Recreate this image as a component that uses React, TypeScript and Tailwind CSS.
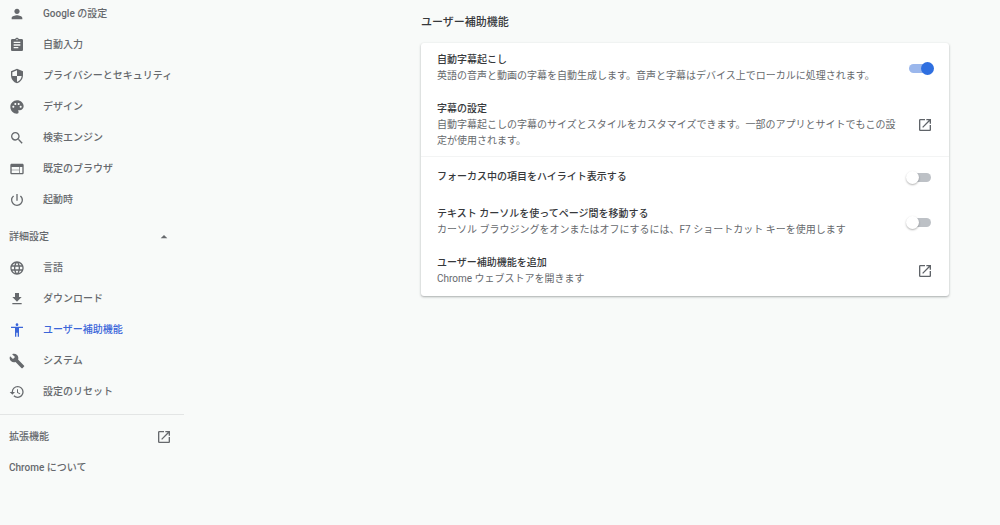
import { useState } from 'react'
import type { IconType } from 'react-icons'
import {
  MdAccessibility,
  MdArrowDropUp,
  MdAssignment,
  MdBuild,
  MdDownload,
  MdLanguage,
  MdOpenInNew,
  MdPalette,
  MdPerson,
  MdPowerSettingsNew,
  MdRestore,
  MdSearch,
  MdSecurity,
  MdWeb,
} from 'react-icons/md'

interface NavItem {
  label: string
  icon: IconType
  active?: boolean
}

const basicItems: NavItem[] = [
  { label: 'Google の設定', icon: MdPerson },
  { label: '自動入力', icon: MdAssignment },
  { label: 'プライバシーとセキュリティ', icon: MdSecurity },
  { label: 'デザイン', icon: MdPalette },
  { label: '検索エンジン', icon: MdSearch },
  { label: '既定のブラウザ', icon: MdWeb },
  { label: '起動時', icon: MdPowerSettingsNew },
]

const advancedItems: NavItem[] = [
  { label: '言語', icon: MdLanguage },
  { label: 'ダウンロード', icon: MdDownload },
  { label: 'ユーザー補助機能', icon: MdAccessibility, active: true },
  { label: 'システム', icon: MdBuild },
  { label: '設定のリセット', icon: MdRestore },
]

function NavList({ items }: { items: NavItem[] }) {
  return (
    <ul>
      {items.map(({ label, icon: Icon, active }) => (
        <li key={label}>
          <a
            href="#"
            aria-current={active ? 'page' : undefined}
            className={`flex h-[31px] items-center gap-[18px] pl-[9px] ${active ? 'text-[#3b66d9]' : ''}`}
          >
            <Icon className="size-4 shrink-0" />
            <span className="whitespace-nowrap">{label}</span>
          </a>
        </li>
      ))}
    </ul>
  )
}

function Sidebar() {
  const [open, setOpen] = useState(true)

  return (
    <nav className="-mt-0.5 w-[184px] shrink-0 font-medium text-[#66696d]">
      <NavList items={basicItems} />

      <button
        type="button"
        aria-expanded={open}
        onClick={() => setOpen(!open)}
        className="mt-1.5 flex h-[31px] w-full items-center justify-between pr-3 pl-[9px]"
      >
        詳細設定
        <MdArrowDropUp className={open ? 'size-4' : 'size-4 rotate-180'} />
      </button>
      {open && <NavList items={advancedItems} />}

      {/* Footer links */}
      <div className="mt-[7px] border-t border-[#e3e5e5] pt-1.5">
        <a href="#" className="flex h-[31px] items-center justify-between pr-3 pl-[9px]">
          拡張機能
          <MdOpenInNew className="size-4" />
        </a>
        <a href="#" className="flex h-[31px] items-center pl-[9px]">
          Chrome について
        </a>
      </div>
    </nav>
  )
}

interface RowProps {
  title: string
  description?: string
}

function RowText({ title, description }: RowProps) {
  return (
    <span className="block flex-1">
      <span className="block font-medium text-[#36383b]">{title}</span>
      {description && <span className="block text-[#66696d]">{description}</span>}
    </span>
  )
}

function ToggleRow({ title, description, defaultChecked }: RowProps & { defaultChecked?: boolean }) {
  return (
    <label className={`flex items-center gap-5 px-4 py-2 ${description ? 'min-h-[50px]' : 'min-h-10'}`}>
      <RowText title={title} description={description} />
      <input
        type="checkbox"
        role="switch"
        defaultChecked={defaultChecked}
        className="relative mr-0.5 h-[9px] w-[22px] shrink-0 appearance-none rounded-full bg-[#bdc1c6] before:absolute before:-top-0.5 before:-left-[3px] before:size-[13px] before:rounded-full before:bg-white before:shadow-[0_1px_2px_rgba(0,0,0,0.3)] checked:bg-[#9bb7ec] checked:before:left-3 checked:before:bg-[#2f6fe0] checked:before:shadow-none"
      />
    </label>
  )
}

function LinkRow({ title, description }: RowProps) {
  return (
    <a href="#" className="flex items-center gap-4 px-4 pt-2 pb-[7px]">
      <RowText title={title} description={description} />
      <MdOpenInNew className="size-4 shrink-0 text-[#5f6368]" />
    </a>
  )
}

export default function App() {
  return (
    <div className="flex min-h-screen bg-[#f8faf9] font-['Roboto','Noto_Sans_CJK_JP',sans-serif] text-[10px] leading-4">
      <Sidebar />

      <main className="flex-1 pt-[15px] pr-[51px] pl-6">
        <section className="ml-auto max-w-[528px]">
          <h1 className="mb-3 text-[11px] font-medium text-[#36383b]">ユーザー補助機能</h1>

          <div className="rounded-[3px] bg-white pb-0.5 shadow-[0_1px_2px_rgba(60,64,67,0.3),0_1px_3px_rgba(60,64,67,0.15)]">
            <ToggleRow
              title="自動字幕起こし"
              description="英語の音声と動画の字幕を自動生成します。音声と字幕はデバイス上でローカルに処理されます。"
              defaultChecked
            />
            <LinkRow
              title="字幕の設定"
              description="自動字幕起こしの字幕のサイズとスタイルをカスタマイズできます。一部のアプリとサイトでもこの設定が使用されます。"
            />
            <div className="border-t border-[#f3f4f4]">
              <ToggleRow title="フォーカス中の項目をハイライト表示する" />
            </div>
            <ToggleRow
              title="テキスト カーソルを使ってページ間を移動する"
              description="カーソル ブラウジングをオンまたはオフにするには、F7 ショートカット キーを使用します"
            />
            <LinkRow title="ユーザー補助機能を追加" description="Chrome ウェブストアを開きます" />
          </div>
        </section>
      </main>
    </div>
  )
}
